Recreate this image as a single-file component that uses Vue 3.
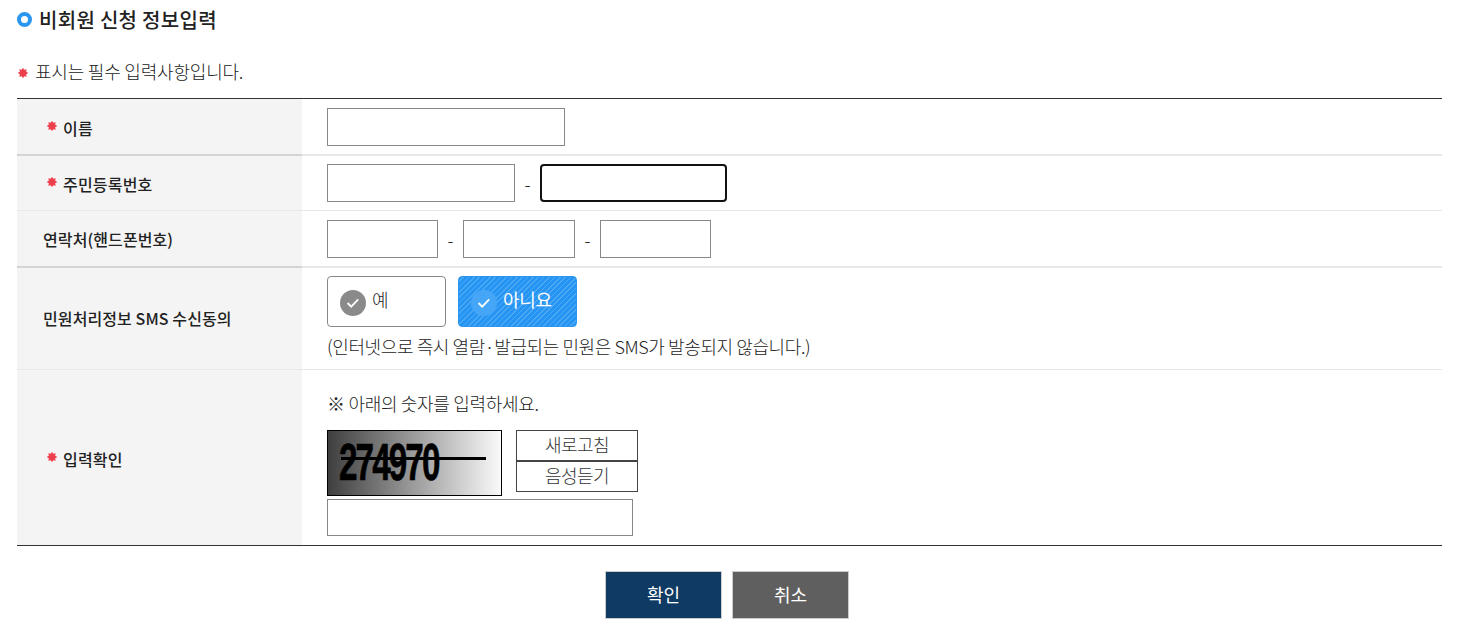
<script setup>
const smsOptions = [
  { label: '예', active: false },
  { label: '아니요', active: true }
]
// 8-point burst used as the "required" mark
const starPoints = (() => {
  const pts = []
  for (let i = 0; i < 16; i++) {
    const r = i % 2 === 0 ? 5.2 : 3.4
    const a = (Math.PI / 8) * i
    pts.push(`${(5 + r * Math.sin(a)).toFixed(2)},${(5 - r * Math.cos(a)).toFixed(2)}`)
  }
  return pts.join(' ')
})()
</script>

<template>
  <div class="page">
    <h2 class="title"><span class="title-dot"></span>비회원 신청 정보입력</h2>
    <p class="notice">
      <svg class="star star--notice" width="10" height="10" viewBox="0 0 10 10"><polygon :points="starPoints" /></svg>
      표시는 필수 입력사항입니다.
    </p>

    <div class="form">
      <div class="row row-name">
        <div class="label">
          <svg class="star" width="10" height="10" viewBox="0 0 10 10"><polygon :points="starPoints" /></svg>
          이름
        </div>
        <div class="field">
          <input class="input w-238" type="text" />
        </div>
      </div>

      <div class="row row-id">
        <div class="label">
          <svg class="star" width="10" height="10" viewBox="0 0 10 10"><polygon :points="starPoints" /></svg>
          주민등록번호
        </div>
        <div class="field">
          <input class="input w-188" type="text" />
          <span class="dash">-</span>
          <input class="input input--focus w-187" type="text" />
        </div>
      </div>

      <div class="row row-phone">
        <div class="label label--plain">연락처(핸드폰번호)</div>
        <div class="field">
          <input class="input w-111" type="text" />
          <span class="dash">-</span>
          <input class="input w-112" type="text" />
          <span class="dash">-</span>
          <input class="input w-111" type="text" />
        </div>
      </div>

      <div class="row row-sms">
        <div class="label label--plain">민원처리정보 SMS 수신동의</div>
        <div class="field field--column">
          <div class="sms-options">
            <button
              v-for="opt in smsOptions"
              :key="opt.label"
              type="button"
              :class="['sms-btn', { 'sms-btn--active': opt.active }]"
            >
              <span class="sms-check">
                <svg width="14" height="12" viewBox="0 0 14 12">
                  <path d="M1.6 6 L5.2 9.6 L12.2 2.4" fill="none" stroke="#fff" stroke-width="1.8" />
                </svg>
              </span>
              <span class="sms-text">{{ opt.label }}</span>
            </button>
          </div>
          <p class="sms-note">(인터넷으로 즉시 열람·발급되는 민원은 SMS가 발송되지 않습니다.)</p>
        </div>
      </div>

      <div class="row row-captcha">
        <div class="label">
          <svg class="star" width="10" height="10" viewBox="0 0 10 10"><polygon :points="starPoints" /></svg>
          입력확인
        </div>
        <div class="field field--column">
          <p class="captcha-note">※ 아래의 숫자를 입력하세요.</p>
          <div class="captcha-box">
            <div class="captcha-img">
              <span class="captcha-digits">274970</span>
              <span class="captcha-line"></span>
            </div>
            <div class="captcha-btns">
              <button type="button" class="captcha-btn">새로고침</button>
              <button type="button" class="captcha-btn">음성듣기</button>
            </div>
          </div>
          <input class="input captcha-input" type="text" />
        </div>
      </div>
    </div>

    <div class="actions">
      <button type="button" class="action action--ok">확인</button>
      <button type="button" class="action action--cancel">취소</button>
    </div>
  </div>
</template>

<style scoped>
.page {
  width: 1464px;
  height: 628px;
  overflow: hidden;
  box-sizing: border-box;
  padding: 6px 22px 0 17px;
  font-family: "Noto Sans CJK KR", "Noto Sans", sans-serif;
  color: #333;
}

.title {
  display: flex;
  align-items: center;
  height: 26px;
  margin: 0;
  font-size: 20px;
  font-weight: 500;
  letter-spacing: 0.3px;
  color: #222;
}

.title-dot {
  width: 15px;
  height: 15px;
  box-sizing: border-box;
  margin: 1px 7px 0 0;
  border: 4px solid #2a96f0;
  border-radius: 50%;
}

.notice {
  display: flex;
  align-items: center;
  height: 24px;
  margin: 27px 0 0;
  font-size: 18px;
  font-weight: 300;
  letter-spacing: -0.2px;
  color: #222;
}

.star {
  flex-shrink: 0;
  margin: -4px 6px 0 0;
  fill: #ee3f4d;
}

.star--notice {
  margin: 4px 7px 0 1px;
}

.form {
  margin-top: 15px;
  border-top: 1px solid #333;
  border-bottom: 1px solid #333;
}

.row {
  display: flex;
  box-sizing: border-box;
  border-bottom: 1px solid #e8e8e8;
}

.row:last-child {
  border-bottom: 0;
}

.row-name { height: 57px; border-bottom-width: 2px; }
.row-id { height: 55px; }
.row-phone { height: 57px; border-bottom-width: 2px; }
.row-sms { height: 102px; }
.row-captcha { height: 175px; }

.label {
  display: flex;
  align-items: center;
  flex-shrink: 0;
  width: 285px;
  box-sizing: border-box;
  padding-left: 30px;
  padding-top: 2px;
  background: #f4f4f4;
  font-size: 16px;
  font-weight: 500;
  letter-spacing: 0.2px;
  color: #222;
}

.label--plain {
  padding-left: 26px;
  padding-top: 0;
  letter-spacing: 0.1px;
}

.row-sms .label {
  padding-bottom: 2px;
}

.row-name .label,
.row-phone .label {
  box-shadow: 0 2px 0 #d4d4d4;
}

.field {
  display: flex;
  align-items: flex-start;
  flex: 1;
  padding: 9px 0 0 25px;
}

.field--column {
  flex-direction: column;
}

.row-id .field,
.row-sms .field {
  padding-top: 8px;
}

.input {
  display: block;
  box-sizing: border-box;
  height: 38px;
  margin: 0;
  padding: 0 8px;
  border: 1px solid #888;
  background: #fff;
  outline: none;
}

.input--focus {
  border: 2px solid #111;
  border-radius: 4px;
}

.w-238 { width: 238px; }
.w-188 { width: 188px; }
.w-187 { width: 187px; }
.w-111 { width: 111px; }
.w-112 { width: 112px; }

.dash {
  width: 25px;
  line-height: 38px;
  text-align: center;
  font-size: 18px;
  font-weight: 300;
  color: #222;
}

.sms-options {
  display: flex;
  gap: 12px;
}

.sms-btn {
  display: flex;
  align-items: center;
  box-sizing: border-box;
  width: 119px;
  height: 51px;
  padding: 0 0 0 12px;
  border: 1px solid #888;
  border-radius: 4px;
  background: #fff;
  font-family: inherit;
  font-size: 18px;
  font-weight: 300;
  letter-spacing: -0.3px;
  color: #222;
}

.sms-btn--active {
  border-color: #2a96f0;
  background: repeating-linear-gradient(135deg, #2694f2 0 2.6px, #4aa8f5 2.6px 3.8px);
  color: #fff;
  font-weight: 400;
}

.sms-check {
  display: flex;
  align-items: center;
  justify-content: center;
  width: 26px;
  height: 26px;
  margin-top: 3px;
  border-radius: 50%;
  background: #8a8a8a;
}

.sms-btn--active .sms-check {
  background: #45a6f7;
}

.sms-text {
  margin: -5px 0 0 6px;
}

.sms-note {
  margin: 6px 0 0;
  font-size: 18px;
  font-weight: 300;
  line-height: 26px;
  letter-spacing: -0.4px;
  color: #222;
}

.captcha-note {
  margin: 12px 0 0;
  font-size: 18px;
  font-weight: 300;
  line-height: 24px;
  letter-spacing: -0.3px;
  color: #222;
}

.captcha-box {
  display: flex;
  align-items: flex-start;
  gap: 14px;
  margin-top: 15px;
}

.captcha-img {
  position: relative;
  box-sizing: border-box;
  width: 175px;
  height: 66px;
  overflow: hidden;
  border: 1px solid #000;
  background: linear-gradient(90deg, #3f3f3f 0%, #fafafa 100%);
}

.captcha-digits {
  position: absolute;
  left: 11px;
  top: 3px;
  transform: scaleX(0.64);
  transform-origin: left center;
  font-family: "Liberation Sans", sans-serif;
  font-size: 52px;
  font-weight: 700;
  line-height: 56px;
  letter-spacing: -3px;
  color: #000;
  -webkit-text-stroke: 0.6px #000;
}

.captcha-line {
  position: absolute;
  left: 13px;
  top: 26px;
  width: 145px;
  height: 3px;
  background: #000;
}

.captcha-btns {
  display: flex;
  flex-direction: column;
}

.captcha-btn {
  box-sizing: border-box;
  width: 122px;
  height: 31px;
  padding: 0 0 3px;
  border: 1px solid #444;
  background: #fff;
  font-family: inherit;
  font-size: 18px;
  font-weight: 300;
  letter-spacing: -0.5px;
  color: #333;
}

.captcha-input {
  width: 306px;
  height: 37px;
  margin-top: 3px;
}

.actions {
  display: flex;
  justify-content: center;
  gap: 10px;
  margin-top: 25px;
  padding-right: 5px;
}

.action {
  box-sizing: border-box;
  width: 117px;
  height: 48px;
  padding: 0 0 2px;
  border: 1px solid #ccc;
  font-family: inherit;
  font-size: 18px;
  font-weight: 400;
  color: #fff;
}

.action--ok {
  background: #0e3a63;
}

.action--cancel {
  background: #5f5f5f;
}
</style>
